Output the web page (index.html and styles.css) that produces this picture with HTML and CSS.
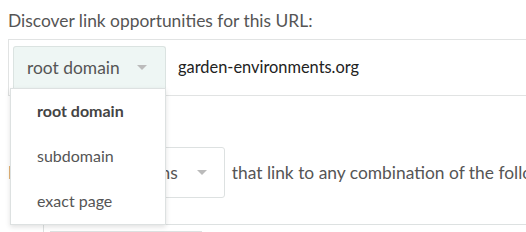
FILE: index.html
```html
<!DOCTYPE html>
<html lang="en">
<head>
    <meta charset="UTF-8">
    <title>Link opportunities</title>
    <link rel="stylesheet" href="styles.css">
</head>
<body>
    <div class="page">
        <p class="prompt">Discover link opportunities for this URL:</p>
        <div class="url-row">
            <div class="scope">
                <button class="scope-button">root domain <span class="caret"></span></button>
                <ul class="scope-menu">
                    <li class="scope-item selected">root domain</li>
                    <li class="scope-item">subdomain</li>
                    <li class="scope-item">exact page</li>
                </ul>
            </div>
            <span class="url">garden-environments.org</span>
        </div>
        <div class="filter-row">
            <span>Include</span>
            <div class="filter-select">all domains <span class="caret"></span></div>
            <span>that link to any combination of the following:</span>
        </div>
        <div class="targets">
            <div class="target-input"></div>
        </div>
    </div>
</body>
</html>
```

FILE: styles.css
```css
body {
    margin: 0;
    font-family: Lato, "Open Sans", sans-serif;
    font-size: 17.4px;
    line-height: 22px;
    color: #555;
    background-color: #fff;
    overflow: hidden;
    white-space: nowrap;
}
.page {
    padding-left: 8px;
}
.prompt {
    margin: 10px 0 7px;
}
.url-row {
    display: flex;
    align-items: center;
    border: 1px solid #e1e3e3;
    border-right: none;
    padding: 6px 0 7px 4px;
}
.scope {
    position: relative;
}
.scope-button {
    display: flex;
    align-items: center;
    width: 153px;
    height: 42px;
    padding: 0 0 0 13px;
    font: inherit;
    color: #555;
    background-color: #eef6f4;
    border: 1px solid #dbe3e1;
    border-bottom: none;
    border-radius: 3px 3px 0 0;
}
.caret {
    display: inline-block;
    margin-left: 17px;
    border-left: 5px solid transparent;
    border-right: 5px solid transparent;
    border-top: 5px solid #bbb;
}
.url {
    margin-left: 12px;
    font-size: 16.4px;
    color: #222;
}
/* Open dropdown sits over the rows below */
.scope-menu {
    position: absolute;
    left: -3px;
    top: 42px;
    width: 154px;
    margin: 0;
    padding: 0;
    list-style: none;
    font-size: 16px;
    background-color: #fff;
    border: 1px solid #dde1e1;
    box-shadow: 0 2px 5px rgba(0, 0, 0, 0.12);
    z-index: 2;
}
.scope-item {
    padding: 11px 0 12px 26px;
}
.scope-item.selected {
    font-weight: bold;
    color: #444;
}
.filter-row {
    display: flex;
    align-items: center;
    margin-top: 51px;
}
.filter-select {
    display: flex;
    align-items: center;
    height: 49px;
    margin: 0 7px 0 12px;
    padding: 0 17px 0 16px;
    border: 1px solid #dde1e1;
    border-radius: 3px;
}
.filter-select .caret {
    margin-left: 19px;
}
.targets {
    margin: 26px 0 0 35px;
    padding: 6px;
    border-top: 1px solid #dde1e1;
    border-left: 1px solid #dde1e1;
}
.target-input {
    width: 150px;
    height: 40px;
    border: 1px solid #dde1e1;
}
```
